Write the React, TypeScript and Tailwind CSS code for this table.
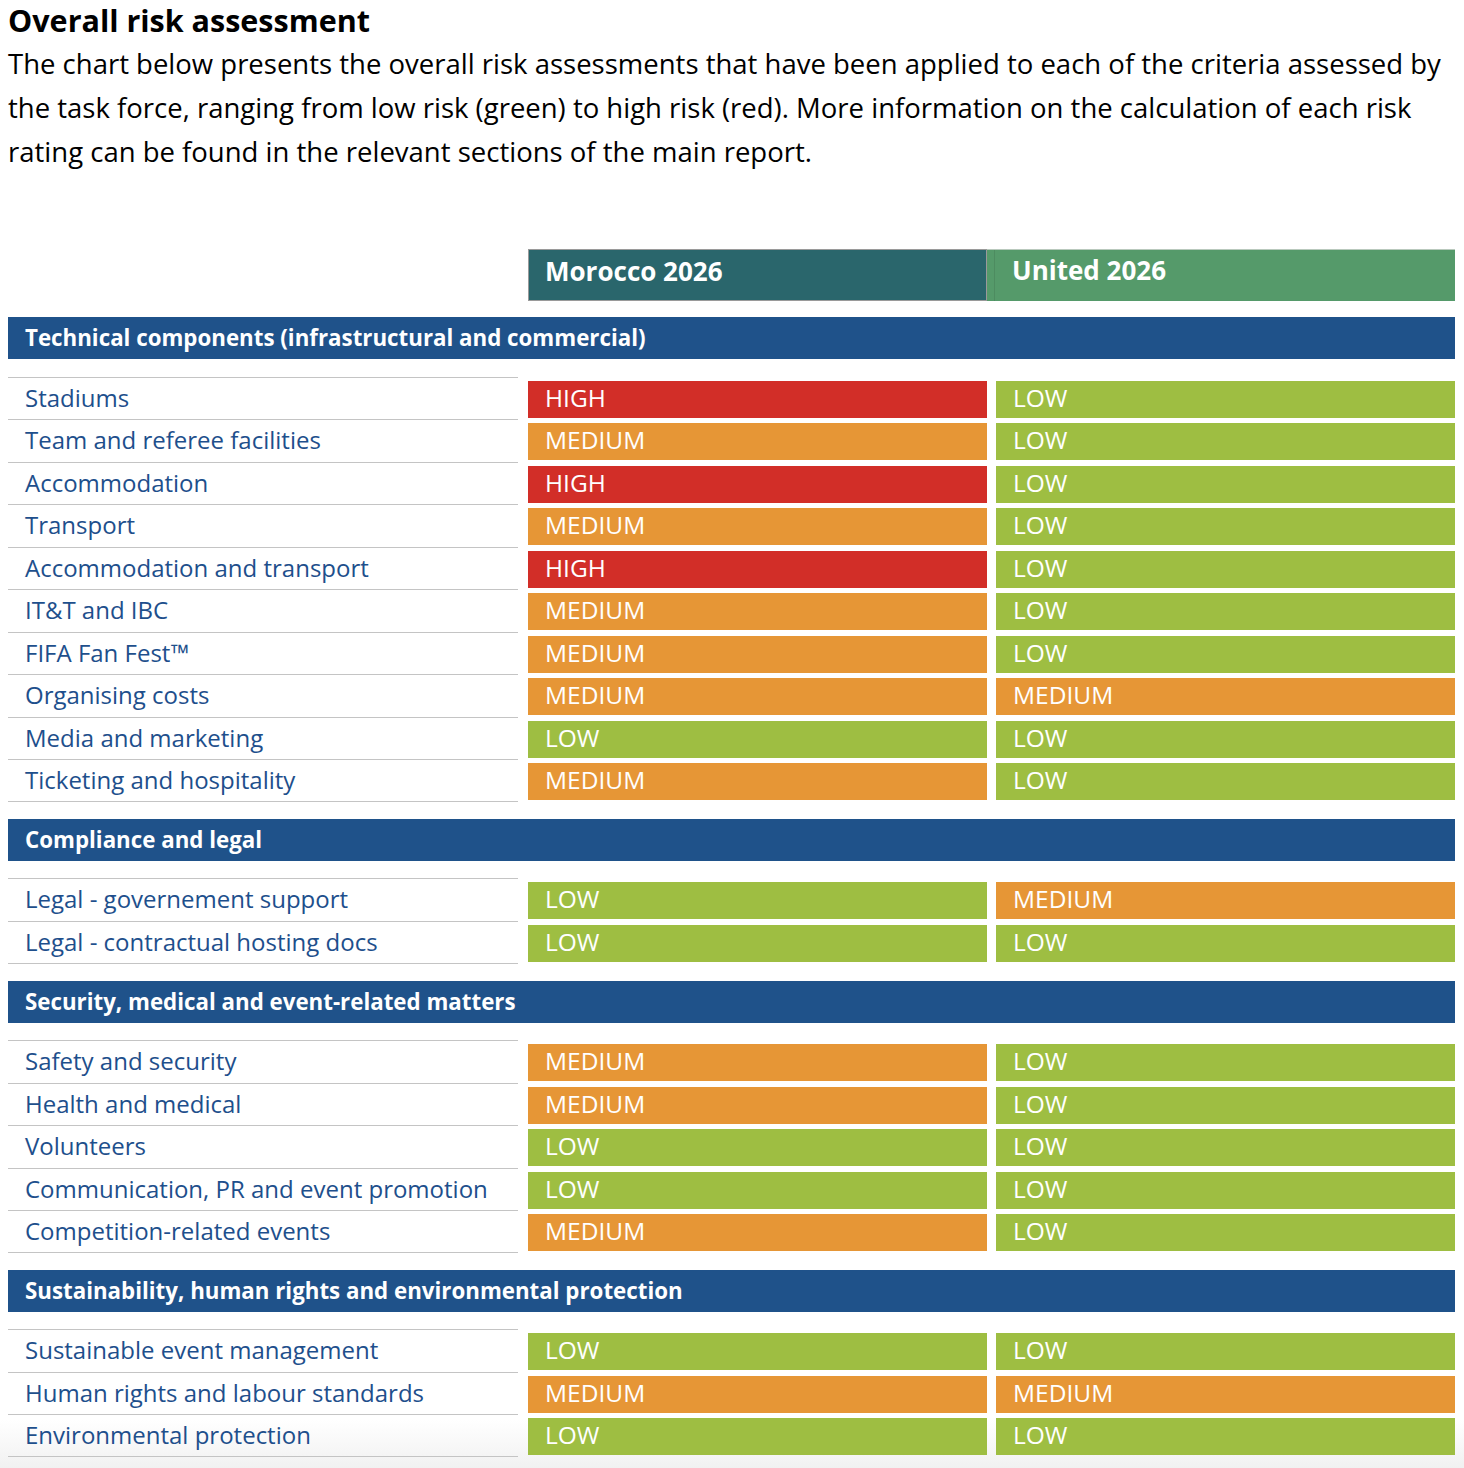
import React from 'react';

type Level = 'HIGH' | 'MEDIUM' | 'LOW';

type Row = { label: string; morocco: Level; united: Level };
type Section = { title: string; rows: Row[] };

const sections: Section[] = [
  {
    title: 'Technical components (infrastructural and commercial)',
    rows: [
      { label: 'Stadiums', morocco: 'HIGH', united: 'LOW' },
      { label: 'Team and referee facilities', morocco: 'MEDIUM', united: 'LOW' },
      { label: 'Accommodation', morocco: 'HIGH', united: 'LOW' },
      { label: 'Transport', morocco: 'MEDIUM', united: 'LOW' },
      { label: 'Accommodation and transport', morocco: 'HIGH', united: 'LOW' },
      { label: 'IT&T and IBC', morocco: 'MEDIUM', united: 'LOW' },
      { label: 'FIFA Fan Fest™', morocco: 'MEDIUM', united: 'LOW' },
      { label: 'Organising costs', morocco: 'MEDIUM', united: 'MEDIUM' },
      { label: 'Media and marketing', morocco: 'LOW', united: 'LOW' },
      { label: 'Ticketing and hospitality', morocco: 'MEDIUM', united: 'LOW' },
    ],
  },
  {
    title: 'Compliance and legal',
    rows: [
      { label: 'Legal - governement support', morocco: 'LOW', united: 'MEDIUM' },
      { label: 'Legal - contractual hosting docs', morocco: 'LOW', united: 'LOW' },
    ],
  },
  {
    title: 'Security, medical and event-related matters',
    rows: [
      { label: 'Safety and security', morocco: 'MEDIUM', united: 'LOW' },
      { label: 'Health and medical', morocco: 'MEDIUM', united: 'LOW' },
      { label: 'Volunteers', morocco: 'LOW', united: 'LOW' },
      { label: 'Communication, PR and event promotion', morocco: 'LOW', united: 'LOW' },
      { label: 'Competition-related events', morocco: 'MEDIUM', united: 'LOW' },
    ],
  },
  {
    title: 'Sustainability, human rights and environmental protection',
    rows: [
      { label: 'Sustainable event management', morocco: 'LOW', united: 'LOW' },
      { label: 'Human rights and labour standards', morocco: 'MEDIUM', united: 'MEDIUM' },
      { label: 'Environmental protection', morocco: 'LOW', united: 'LOW' },
    ],
  },
];

const levelColor: Record<Level, string> = {
  HIGH: 'bg-[#d22e28]',
  MEDIUM: 'bg-[#e69636]',
  LOW: 'bg-[#9ebe42]',
};

const RiskCell: React.FC<{ level: Level }> = ({ level }) => (
  <div className={`mt-[4px] h-[37px] w-[459px] pl-[17px] text-[24.5px] leading-[34px] text-white ${levelColor[level]}`}>
    {level}
  </div>
);

const App: React.FC = () => {
  return (
    <div className="min-h-[1468px] w-[1464px] bg-[linear-gradient(180deg,#fff_0,#fff_1420px,#f1f1f1_1468px)] pl-2 font-['Open_Sans',sans-serif] text-black">
      <h1 className="text-[30.5px] font-bold leading-[41.5px]">Overall risk assessment</h1>
      <p className="w-[1440px] text-[27.5px] leading-[44px]">
        The chart below presents the overall risk assessments that have been applied to each of the criteria assessed by
        the task force, ranging from low risk (green) to high risk (red). More information on the calculation of each risk
        rating can be found in the relevant sections of the main report.
      </p>

      <div className="mt-[75.5px] w-[1447px]">
        <div className="flex h-[52px]">
          <div className="ml-[520px] w-[459px] border border-[#9a9a9a] bg-[#2a666c] pl-[16px] text-[26px] font-bold leading-[42px] text-white">
            Morocco 2026
          </div>
          <div className="flex w-[468px] border-t border-[#b9c9bd] bg-[#559a6a]">
            <div className="w-[8px] border-r border-[#4d8c60]" />
            <div className="pl-[17px] text-[26px] font-bold leading-[40px] text-white">United 2026</div>
          </div>
        </div>

        {sections.map((section, s) => (
          <section key={section.title} className={s === 0 ? 'mt-[16px]' : 'mt-[17px]'}>
            <h2 className="h-[42px] bg-[#1f528a] pl-[17px] text-[22.3px] font-bold leading-[42px] text-white">
              {section.title}
            </h2>
            <div className="mt-[17.5px]">
              {section.rows.map((row, i) => (
                <div key={row.label} className="flex h-[42.55px]">
                  <div
                    className={`w-[510px] border-t border-[#c4c4c4] pl-[17px] text-[24px] leading-[40px] text-[#1e4f8c] ${
                      i === section.rows.length - 1 ? 'border-b' : ''
                    }`}
                  >
                    {row.label}
                  </div>
                  <div className="ml-[10px] flex gap-[9px]">
                    <RiskCell level={row.morocco} />
                    <RiskCell level={row.united} />
                  </div>
                </div>
              ))}
            </div>
          </section>
        ))}
      </div>
    </div>
  );
};

export default App;
